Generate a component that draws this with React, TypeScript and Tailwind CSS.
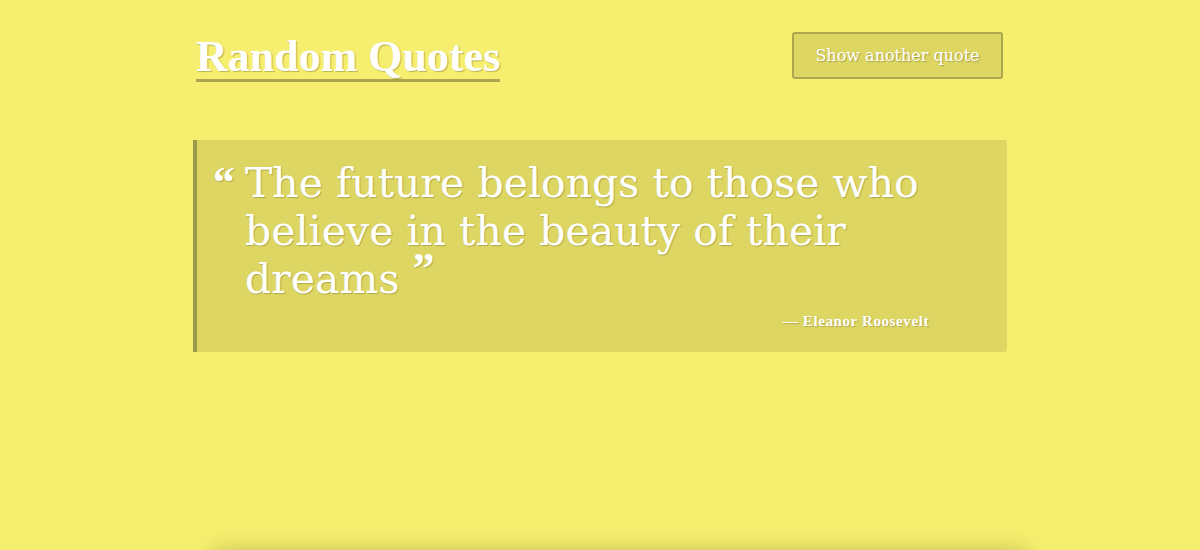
export default function App() {
  return (
    <div className="h-[550px] w-full overflow-hidden bg-[#f6ee6e] [font-family:'DejaVu_Serif','Liberation_Serif',serif]">
      <div className="mx-auto w-[814px]">
        <header className="flex items-start justify-between pt-[35px]">
          <h1 className="ml-[3px] border-b-[3px] border-[#aca64e] pb-0 text-[44px] font-bold leading-[44px] text-white [font-family:'Liberation_Serif',serif] [text-shadow:1px_1px_1px_rgba(0,0,0,0.25)]">
            Random Quotes
          </h1>
          <button className="mr-[4px] -mt-[3px] h-[47px] w-[211px] rounded-[3px] border-2 border-[#aca64e] bg-[#ddd663] text-[16px] text-white [text-shadow:1px_1px_1px_rgba(0,0,0,0.25)]">
            Show another quote
          </button>
        </header>
        <div className="mt-[58px] rounded-r-[3px] border-l-[4px] border-[#9d9a4a] bg-[#ddd663] pb-[21px] pl-[16px] pr-[78px] pt-[19px] text-white [text-shadow:1px_1px_1px_rgba(0,0,0,0.2)]">
          <div className="flex">
            <span className="w-[32px] shrink-0 pt-[2px] text-[44px] font-bold leading-[44px] [font-family:'Liberation_Serif',serif]">“</span>
            <p className="text-[41px] leading-[48px]">
              The future belongs to those who believe in the beauty of their dreams{" "}
              <span className="relative -top-[10px] text-[44px] font-bold leading-[32px] [font-family:'Liberation_Serif',serif]">”</span>
            </p>
          </div>
          <div className="mt-[8px] text-right text-[15px] font-semibold leading-[20px] tracking-[0.6px] [font-family:'Liberation_Serif',serif]">— Eleanor Roosevelt</div>
        </div>
        <div className="mt-[201px] h-[40px] translate-x-[20px] rounded bg-[#f6ee6e] shadow-[0_0_24px_rgba(0,0,0,0.25)]" />
      </div>
    </div>
  );
}
